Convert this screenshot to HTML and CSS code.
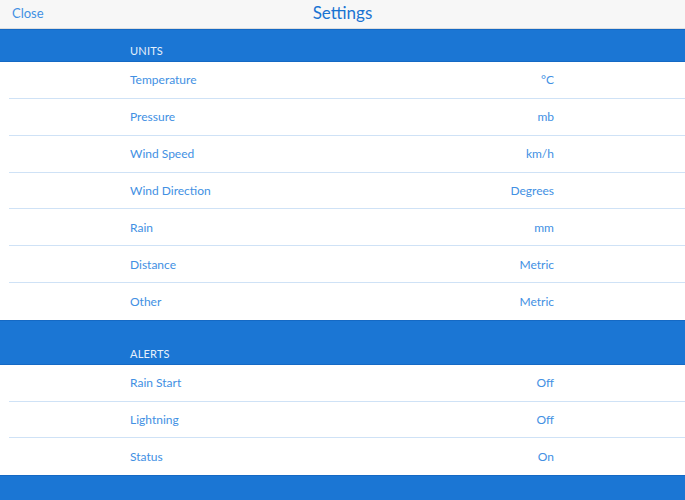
FILE: index.html
```html
<!DOCTYPE html>
<html>
<head>
<meta charset="utf-8">
<link rel="stylesheet" href="styles.css">
</head>
<body>
<div class="header">
  <span class="close">Close</span>
  <span class="title">Settings</span>
</div>
<div class="section first"><div class="inner">UNITS</div></div>
<div class="group units">
  <div class="row"><div class="inner"><span>Temperature</span><span>°C</span></div></div>
  <div class="row"><div class="inner"><span>Pressure</span><span>mb</span></div></div>
  <div class="row"><div class="inner"><span>Wind Speed</span><span>km/h</span></div></div>
  <div class="row"><div class="inner"><span>Wind Direction</span><span>Degrees</span></div></div>
  <div class="row"><div class="inner"><span>Rain</span><span>mm</span></div></div>
  <div class="row"><div class="inner"><span>Distance</span><span>Metric</span></div></div>
  <div class="row"><div class="inner"><span>Other</span><span>Metric</span></div></div>
</div>
<div class="section"><div class="inner">ALERTS</div></div>
<div class="group alerts">
  <div class="row"><div class="inner"><span>Rain Start</span><span>Off</span></div></div>
  <div class="row"><div class="inner"><span>Lightning</span><span>Off</span></div></div>
  <div class="row"><div class="inner"><span>Status</span><span>On</span></div></div>
</div>
<div class="section tail"></div>
</body>
</html>
```
FILE: styles.css
```css
* { box-sizing: border-box; }
html, body { margin: 0; padding: 0; }
body {
  width: 685px;
  height: 500px;
  overflow: hidden;
  font-family: Lato, "Open Sans", sans-serif;
  background: #ffffff;
}
.header {
  height: 29px;
  background: #f7f7f7;
  border-bottom: 1px solid #dedede;
  position: relative;
  display: flex;
  align-items: center;
  justify-content: center;
}
.close {
  position: absolute;
  left: 12px;
  top: 5px;
  font-size: 13px;
  color: #4290e3;
}
.title {
  font-size: 17px;
  color: #1a73d2;
  margin-top: -4px;
}
.section {
  background: #1b76d4;
  border-top: 1px solid #1569c4;
  border-bottom: 1px solid #1569c4;
  height: 45px;
  display: flex;
  align-items: flex-end;
  color: #e6f0fb;
  font-size: 11px;
}
.section.first { height: 33px; }
.section .inner {
  width: 423px;
  margin: 0 auto;
  padding-bottom: 4px;
  padding-left: 0;
  position: relative;
  left: -1px;
  letter-spacing: 0.2px;
}
.section.tail { height: 25px; border-bottom: none; }
.row {
  margin-left: 9px;
  border-bottom: 1px solid #cfe2f6;
  color: #4290e3;
  font-size: 12px;
}
.units .row { height: 36.857px; }
.alerts .row { height: 36.667px; }
.row:last-child { border-bottom: none; }
.row .inner {
  width: 424px;
  height: 100%;
  margin: 0 auto;
  position: relative;
  left: -5px;
  display: flex;
  justify-content: space-between;
  align-items: center;
}
```
